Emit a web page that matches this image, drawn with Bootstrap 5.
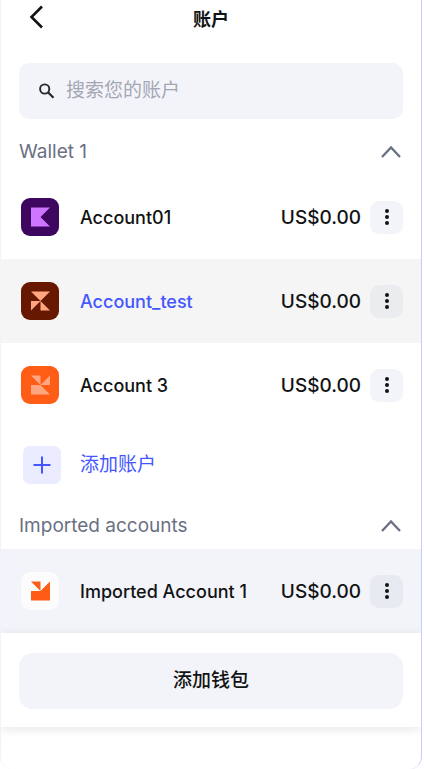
<!DOCTYPE html>
<html lang="zh-CN">
<head>
<meta charset="utf-8">
<meta name="viewport" content="width=device-width, initial-scale=1">
<title>账户</title>
<link href="https://cdn.jsdelivr.net/npm/bootstrap@5.3.0/dist/css/bootstrap.min.css" rel="stylesheet">
<style>
  body { font: 400 19px/28px Inter, "Noto Sans CJK SC", sans-serif; color: #121314; background: #fff; }
  .wallet-panel { min-height: 100vh; margin-right: 2px; border: solid #c6cef9; border-width: 0 1px 0 1px; border-left-color: #eef3fe; border-radius: 0 0 12px 12px; }
  .page-head { height: 38px; padding: 0 18px; }
  .page-head h1 { font-size: 18px; line-height: 40px; font-weight: 700; }
  .back-btn { left: 17px; top: 0; height: 34px; width: 36px; }
  .side-pad { padding-left: 18px; padding-right: 18px; }
  .search-box { margin-top: 25px; height: 56px; padding: 0 18px; border-radius: 10px; background: #f3f4f9; gap: 9px; }
  .search-box input { font-size: 19px; font-weight: 400; color: #121314; outline: 0; }
  .search-box input::placeholder { color: #a3a7b5; opacity: 1; }
  .group-head { height: 46px; color: #6a7083; }
  .group-first { margin-top: 10px; }
  .account-row { height: 84px; padding-left: 20px; padding-right: 18px; font-weight: 500; }
  .row-active { background: #f5f5f5; }
  .row-soft { background: #f3f4f9; }
  .avatar { width: 38px; height: 38px; margin-right: 21px; }
  .name-link { color: #121314; font-size: 18px; line-height: 28px; padding-top: 1px; }
  .amount { padding-top: 1px; }
  .name-active, .add-account { color: #4457ff; }
  .menu-btn { width: 33px; height: 33px; border-radius: 9px; background: #f3f4f9; margin-left: 9px; }
  .row-active .menu-btn { background: #ebecf0; }
  .row-soft .menu-btn { background: #e7eaf1; }
  .add-account { height: 76px; padding-left: 22px; }
  .plus-tile { width: 38px; height: 38px; border-radius: 7px; background: #ebecff; margin-right: 19px; }
  .foot-bar { padding-top: 20px; padding-bottom: 18px; background: #fff; box-shadow: 0 2px 10px rgba(0, 0, 0, .1); clip-path: inset(-5px 0 -16px 0); }
  .add-wallet { height: 56px; border-radius: 14px; background: #f3f4f9; color: #121314; font-weight: 500; }
</style>
</head>
<body>
<main class="wallet-panel">
  <header class="page-head position-relative text-center">
    <button type="button" class="back-btn btn p-0 border-0 position-absolute d-flex align-items-center justify-content-center" aria-label="返回">
      <svg width="16" height="24" viewBox="0 0 16 24" fill="none" stroke="#121314" stroke-width="2.600"><path d="M14 1.500 3.500 12 14 22.500"/></svg>
    </button>
    <h1 class="m-0">账户</h1>
  </header>

  <div class="side-pad">
    <label class="search-box d-flex align-items-center">
      <svg width="20" height="20" viewBox="0 0 20 20" fill="none" stroke="#25272b"><circle cx="7.700" cy="8" r="4.600" stroke-width="1.900"/><path d="m11 11.300 5.500 5.500" stroke-width="2.200"/></svg>
      <input type="text" class="border-0 bg-transparent p-0 flex-grow-1" placeholder="搜索您的账户" aria-label="搜索您的账户">
    </label>
  </div>

  <section>
    <button type="button" class="group-head group-first side-pad border-0 bg-transparent w-100 d-flex align-items-center justify-content-between">
      <span>Wallet 1</span>
      <svg width="24" height="16" viewBox="0 0 24 16" fill="none" stroke="#6a7083" stroke-width="2.300"><path d="m3 13 9-9.500 9 9.500"/></svg>
    </button>
    <div class="account-row d-flex align-items-center">
      <svg class="avatar" viewBox="0 0 38 38"><rect width="38" height="38" rx="9" fill="#3d065f"/><path fill="#d075ff" d="M10 9.500h19L19.500 19l9.500 9.500H10z"/></svg>
      <a href="#" class="name-link text-decoration-none flex-grow-1">Account01</a>
      <span class="amount">US$0.00</span>
      <button type="button" class="menu-btn border-0 p-0 d-flex align-items-center justify-content-center" aria-label="Account01 菜单"><svg width="6" height="18" viewBox="0 0 6 18" fill="#121314"><circle cx="3" cy="3" r="2"/><circle cx="3" cy="9" r="2"/><circle cx="3" cy="15" r="2"/></svg></button>
    </div>
    <div class="account-row row-active d-flex align-items-center">
      <svg class="avatar" viewBox="0 0 38 38"><rect width="38" height="38" rx="9" fill="#661800"/><path fill="#ffa680" d="M10 9.500h19L19.500 19zM10 19h9.500L10 28.500zM19.500 19l9.500 9.500h-9.500z"/></svg>
      <a href="#" class="name-link name-active text-decoration-none flex-grow-1">Account_test</a>
      <span class="amount">US$0.00</span>
      <button type="button" class="menu-btn border-0 p-0 d-flex align-items-center justify-content-center" aria-label="Account_test 菜单"><svg width="6" height="18" viewBox="0 0 6 18" fill="#121314"><circle cx="3" cy="3" r="2"/><circle cx="3" cy="9" r="2"/><circle cx="3" cy="15" r="2"/></svg></button>
    </div>
    <div class="account-row d-flex align-items-center">
      <svg class="avatar" viewBox="0 0 38 38"><rect width="38" height="38" rx="9" fill="#ff5c16"/><path fill="#ffa680" d="M10 9.500h9.500V19zM19.500 19 29 9.500V19zM10 19h9.500l9.500 9.500H10z"/></svg>
      <a href="#" class="name-link text-decoration-none flex-grow-1">Account 3</a>
      <span class="amount">US$0.00</span>
      <button type="button" class="menu-btn border-0 p-0 d-flex align-items-center justify-content-center" aria-label="Account 3 菜单"><svg width="6" height="18" viewBox="0 0 6 18" fill="#121314"><circle cx="3" cy="3" r="2"/><circle cx="3" cy="9" r="2"/><circle cx="3" cy="15" r="2"/></svg></button>
    </div>
    <button type="button" class="add-account border-0 bg-transparent w-100 d-flex align-items-center">
      <span class="plus-tile d-flex align-items-center justify-content-center"><svg width="18" height="18" viewBox="0 0 18 18" stroke="#4457ff" stroke-width="2"><path d="M9 .5v17M.5 9h17"/></svg></span>
      <span>添加账户</span>
    </button>
  </section>

  <section>
    <button type="button" class="group-head side-pad border-0 bg-transparent w-100 d-flex align-items-center justify-content-between">
      <span>Imported accounts</span>
      <svg width="24" height="16" viewBox="0 0 24 16" fill="none" stroke="#6a7083" stroke-width="2.300"><path d="m3 13 9-9.500 9 9.500"/></svg>
    </button>
    <div class="account-row row-soft d-flex align-items-center">
      <svg class="avatar" viewBox="0 0 38 38"><rect width="38" height="38" rx="9" fill="#fcfcfc"/><path fill="#ff5c16" d="M10 9.500h9.500V19L29 9.500v19H10V19h9.500z"/></svg>
      <a href="#" class="name-link text-decoration-none flex-grow-1">Imported Account 1</a>
      <span class="amount">US$0.00</span>
      <button type="button" class="menu-btn border-0 p-0 d-flex align-items-center justify-content-center" aria-label="Imported Account 1 菜单"><svg width="6" height="18" viewBox="0 0 6 18" fill="#121314"><circle cx="3" cy="3" r="2"/><circle cx="3" cy="9" r="2"/><circle cx="3" cy="15" r="2"/></svg></button>
    </div>
  </section>

  <footer class="foot-bar side-pad position-relative">
    <button type="button" class="add-wallet border-0 w-100">添加钱包</button>
  </footer>
</main>
<script src="https://cdn.jsdelivr.net/npm/bootstrap@5.3.0/dist/js/bootstrap.bundle.min.js"></script>
</body>
</html>
